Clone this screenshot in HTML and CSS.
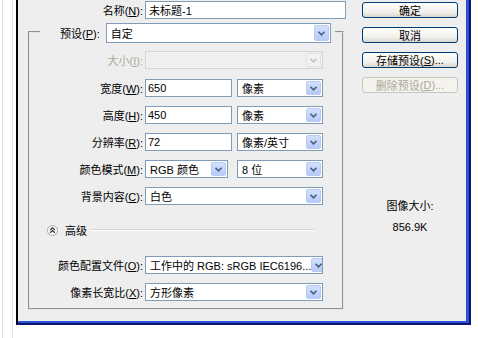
FILE: index.html
```html
<!DOCTYPE html>
<html lang="zh-CN">
<head>
<meta charset="utf-8">
<title>新建</title>
<link rel="stylesheet" href="styles.css">
</head>
<body>
<div class="page">
  <div class="rail"></div>
  <div class="win">
    <div class="win-blue">
      <div class="dlg">
        <div class="main">
          <div class="row name-row">
            <span class="lbl">名称(<u>N</u>):</span>
            <div class="field text w-name">未标题-1</div>
          </div>
          <fieldset class="group">
            <legend class="preset">
              <span class="lbl">预设(<u>P</u>):</span><div class="field select w-preset"><span>自定</span><i class="arrow"><svg width="7" height="5" viewBox="0 0 7 5"><polyline points="0.5,0.8 3.5,3.8 6.5,0.8" fill="none" stroke="#4d6185" stroke-width="1.6"/></svg></i></div>
            </legend>
            <div class="row disabled r-size">
              <span class="lbl">大小(<u>I</u>):</span>
              <div class="field select w-full"><span></span><i class="arrow"><svg width="7" height="5" viewBox="0 0 7 5"><polyline points="0.5,0.8 3.5,3.8 6.5,0.8" fill="none" stroke="#c4c4c4" stroke-width="1.6"/></svg></i></div>
            </div>
            <div class="row r-width">
              <span class="lbl">宽度(<u>W</u>):</span>
              <div class="field text w-num">650</div>
              <div class="field select w-unit"><span>像素</span><i class="arrow"><svg width="7" height="5" viewBox="0 0 7 5"><polyline points="0.5,0.8 3.5,3.8 6.5,0.8" fill="none" stroke="#4d6185" stroke-width="1.6"/></svg></i></div>
            </div>
            <div class="row">
              <span class="lbl">高度(<u>H</u>):</span>
              <div class="field text w-num">450</div>
              <div class="field select w-unit"><span>像素</span><i class="arrow"><svg width="7" height="5" viewBox="0 0 7 5"><polyline points="0.5,0.8 3.5,3.8 6.5,0.8" fill="none" stroke="#4d6185" stroke-width="1.6"/></svg></i></div>
            </div>
            <div class="row">
              <span class="lbl">分辨率(<u>R</u>):</span>
              <div class="field text w-num">72</div>
              <div class="field select w-unit"><span>像素/英寸</span><i class="arrow"><svg width="7" height="5" viewBox="0 0 7 5"><polyline points="0.5,0.8 3.5,3.8 6.5,0.8" fill="none" stroke="#4d6185" stroke-width="1.6"/></svg></i></div>
            </div>
            <div class="row">
              <span class="lbl">颜色模式(<u>M</u>):</span>
              <div class="field select w-mode"><span>RGB 颜色</span><i class="arrow"><svg width="7" height="5" viewBox="0 0 7 5"><polyline points="0.5,0.8 3.5,3.8 6.5,0.8" fill="none" stroke="#4d6185" stroke-width="1.6"/></svg></i></div>
              <div class="field select w-bits"><span>8 位</span><i class="arrow"><svg width="7" height="5" viewBox="0 0 7 5"><polyline points="0.5,0.8 3.5,3.8 6.5,0.8" fill="none" stroke="#4d6185" stroke-width="1.6"/></svg></i></div>
            </div>
            <div class="row">
              <span class="lbl">背景内容(<u>C</u>):</span>
              <div class="field select w-full"><span>白色</span><i class="arrow"><svg width="7" height="5" viewBox="0 0 7 5"><polyline points="0.5,0.8 3.5,3.8 6.5,0.8" fill="none" stroke="#4d6185" stroke-width="1.6"/></svg></i></div>
            </div>
            <div class="adv">
              <svg class="adv-icon" width="11" height="11" viewBox="0 0 11 11"><circle cx="5.5" cy="5.5" r="5" fill="#f8f8f8" stroke="#a8a8a8"/><polyline points="3.2,5 5.5,2.8 7.8,5" fill="none" stroke="#333" stroke-width="1.2"/><polyline points="3.2,7.8 5.5,5.6 7.8,7.8" fill="none" stroke="#333" stroke-width="1.2"/></svg>
              <span class="adv-text">高级</span>
              <span class="adv-line"></span>
            </div>
            <div class="row r-profile">
              <span class="lbl">颜色配置文件(<u>O</u>):</span>
              <div class="field select w-full"><span>工作中的 RGB: sRGB IEC6196...</span><i class="arrow"><svg width="7" height="5" viewBox="0 0 7 5"><polyline points="0.5,0.8 3.5,3.8 6.5,0.8" fill="none" stroke="#4d6185" stroke-width="1.6"/></svg></i></div>
            </div>
            <div class="row">
              <span class="lbl">像素长宽比(<u>X</u>):</span>
              <div class="field select w-full"><span>方形像素</span><i class="arrow"><svg width="7" height="5" viewBox="0 0 7 5"><polyline points="0.5,0.8 3.5,3.8 6.5,0.8" fill="none" stroke="#4d6185" stroke-width="1.6"/></svg></i></div>
            </div>
          </fieldset>
        </div>
        <div class="side">
          <button type="button" class="btn">确定</button>
          <button type="button" class="btn">取消</button>
          <button type="button" class="btn">存储预设(<u>S</u>)...</button>
          <button type="button" class="btn disabled">删除预设(<u>D</u>)...</button>
          <div class="info">
            <div>图像大小:</div>
            <div>856.9K</div>
          </div>
        </div>
      </div>
    </div>
  </div>
</div>
</body>
</html>
```

FILE: styles.css
```css
* { box-sizing: border-box; }

body {
  margin: 0;
  background: #ffffff;
  font-family: "Liberation Sans", "Noto Sans CJK SC", sans-serif;
  font-size: 11px;
  color: #000000;
}

.page {
  display: flex;
  height: 338px;
}

.rail {
  width: 11px;
  margin: 0 3px 0 2px;
  border-left: 1px solid #e2e2e2;
  border-right: 1px solid #e2e2e2;
}

.win {
  width: 455px;
  height: 325px;
  border-left: 2px solid #000000;
  border-right: 2px solid #0a1670;
  border-bottom: 2px solid #0a1670;
}

.win-blue {
  height: 100%;
  border-right: 3px solid #2a52d6;
  border-bottom: 2px solid #2a52d6;
}

.dlg {
  height: 100%;
  background: #eeeeee;
  display: flex;
}

.main {
  width: 328px;
  padding-top: 1px;
}

.row {
  display: flex;
  align-items: center;
  height: 18px;
}

.lbl {
  white-space: nowrap;
  text-align: right;
}

.name-row .lbl {
  width: 125px;
  margin-right: 2px;
}

.field {
  height: 18px;
  border: 1px solid #7f9db9;
  background: #ffffff;
  display: flex;
  align-items: center;
  padding-left: 3px;
  white-space: nowrap;
  overflow: hidden;
}

.select {
  justify-content: space-between;
  padding-left: 4px;
  padding-right: 1px;
}

.arrow {
  flex: none;
  width: 15px;
  height: calc(100% - 2px);
  background: linear-gradient(#d3e0fd, #b6caf7);
  border: 1px solid #b9cbf5;
  border-radius: 2px;
  display: flex;
  align-items: center;
  justify-content: center;
}

.w-name { width: 201px; }

.group {
  margin: 1px 2px 0 10px;
  border: 2px groove #e4e4e4;
  padding: 8px 19px 7px 10px;
  min-width: 0;
}

.preset {
  padding: 3px 4px 0 20px;
  white-space: nowrap;
}

.preset .lbl {
  display: inline-block;
  vertical-align: middle;
  margin-right: 6px;
}

.preset .field {
  display: inline-flex;
  vertical-align: middle;
}

.w-preset {
  width: 225px;
  height: 20px;
}

.group .row .lbl {
  width: 103px;
  margin-right: 2px;
}

.group .row { margin-top: 9px; }
.group .r-size { margin-top: 0; }
.group .r-width { margin-top: 10px; }
.group .r-profile { margin-top: 17px; }

.w-full { width: 178px; }
.w-num { width: 87px; padding-left: 2px; }
.w-unit { width: 86px; margin-left: 5px; }
.w-mode { width: 83px; }
.w-bits { width: 86px; margin-left: 9px; }

.disabled .lbl { color: #aca899; }

.disabled .field {
  border-color: #d6d4cb;
  background: #f0f0f0;
}

.disabled .arrow {
  background: #f2f2f2;
  border-color: #e0e0e0;
}

.adv {
  display: flex;
  align-items: center;
  height: 18px;
  margin-top: 16px;
  padding-left: 7px;
}

.adv-text { margin-left: 7px; }

.adv-line {
  flex: 1;
  height: 2px;
  border-top: 1px solid #d2d2d2;
  border-bottom: 1px solid #ffffff;
  margin: 0 8px 0 4px;
}

.side {
  width: 120px;
  padding: 2px 0 0 16px;
  display: flex;
  flex-direction: column;
}

.btn {
  width: 96px;
  height: 16px;
  margin: 0 0 9px 0;
  padding: 0;
  border: 1px solid #003c74;
  border-radius: 3px;
  background: linear-gradient(#ffffff, #f1f0ec 65%, #d9d5cb);
  font: inherit;
  color: #000000;
  display: flex;
  align-items: center;
  justify-content: center;
  white-space: nowrap;
}

.btn.disabled {
  border-color: #c9c7ba;
  color: #aca899;
  background: #f4f3ee;
}

.info {
  width: 96px;
  margin-top: 94px;
  text-align: center;
  line-height: 21px;
}
```
